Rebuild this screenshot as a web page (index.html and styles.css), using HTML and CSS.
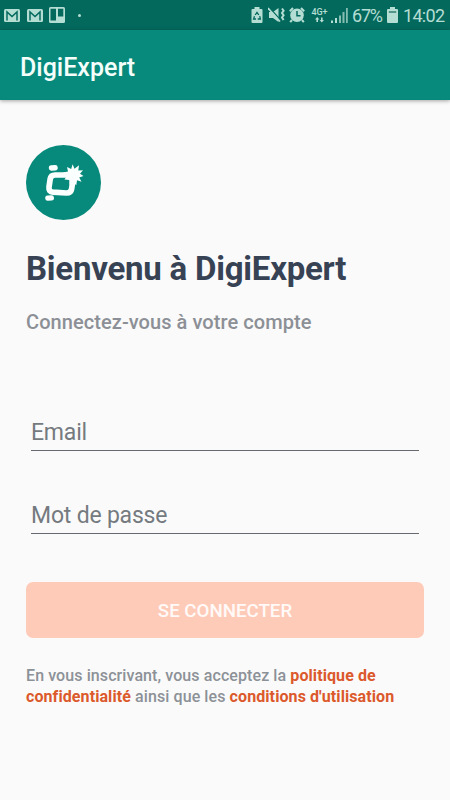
FILE: index.html
```html
<!DOCTYPE html>
<html lang="fr">
<head>
    <meta charset="UTF-8">
    <meta name="viewport" content="width=device-width, initial-scale=1.0">
    <title>DigiExpert</title>
    <link rel="stylesheet" href="styles.css">
</head>
<body>
    <div class="status-bar">
        <div class="status-left">
            <svg class="mail" width="16" height="13" viewBox="0 0 16 13">
                <rect width="16" height="13" rx="1.5" fill="#b4ddd3"/>
                <path d="M3 11.5V3L8 7.5L13 3V11.5" fill="none" stroke="#04695d" stroke-width="1.5"/>
            </svg>
            <svg class="mail" width="16" height="13" viewBox="0 0 16 13">
                <rect width="16" height="13" rx="1.5" fill="#b4ddd3"/>
                <path d="M3 11.5V3L8 7.5L13 3V11.5" fill="none" stroke="#04695d" stroke-width="1.5"/>
            </svg>
            <svg class="board" width="16" height="16" viewBox="0 0 16 16">
                <rect width="16" height="16" rx="1.5" fill="#b4ddd3"/>
                <path d="M1.5 1.7H7V13.5H1.5ZM9 1.7H14.3V9.5H9Z" fill="#04695d"/>
            </svg>
            <span class="dot"></span>
        </div>
        <div class="status-right">
            <svg width="12" height="16" viewBox="0 0 12 16">
                <path d="M3.5 0H8.5V2H10.5Q11.5 2 11.5 3V15Q11.5 16 10.5 16H1.5Q.5 16 .5 15V3Q.5 2 1.5 2H3.5Z" fill="#b4ddd3"/>
                <path d="M4.2 8L6 5.3L7.8 8M8.7 9.2L9.4 12H6.7M5 12H2.6L3.5 9.2" fill="none" stroke="#04695d" stroke-width="1.3"/>
            </svg>
            <svg class="mute" width="17" height="16" viewBox="0 0 17 16">
                <path d="M1 5H5L10.5 1V15L5 11H1Z" fill="#b4ddd3"/>
                <path d="M1 0L12 12.5" stroke="#04695d" stroke-width="1.2"/>
                <path d="M0 1L12 14.5" stroke="#b4ddd3" stroke-width="1.6"/>
                <path d="M14 1.5L15.6 3.7L14 6L15.6 8.2L14 10.5L15.6 13" fill="none" stroke="#b4ddd3" stroke-width="2"/>
            </svg>
            <svg class="alarm" width="16" height="16" viewBox="0 0 16 16">
                <path d="M.8 4.2L4 1M15.2 4.2L12 1M3 13L1.2 15.2M13 13L14.8 15.2" stroke="#b4ddd3" stroke-width="2"/>
                <circle cx="8" cy="8.3" r="6.8" fill="#b4ddd3"/>
                <path d="M8 4V8.8H11.5" fill="none" stroke="#04695d" stroke-width="1.5"/>
            </svg>
            <div class="network">
                <span>4G+</span>
                <svg width="9" height="6" viewBox="0 0 9 6">
                    <path d="M2.2 0L4.4 2.5H3V5H1.4V2.5H0ZM6.8 5.5L4.6 3H6V.5H7.6V3H9Z" fill="#b4ddd3"/>
                </svg>
            </div>
            <svg class="signal" width="17" height="15" viewBox="0 0 17 15">
                <path d="M0 12.5H2V15H0ZM4 10H6V15H4Z" fill="#b4ddd3"/>
                <path d="M8 7.5H10V15H8ZM11.5 4H13.5V15H11.5ZM15 0H16.8V15H15Z" fill="#83bdb1"/>
            </svg>
            <span class="percent">67%</span>
            <svg class="battery" width="11" height="16" viewBox="0 0 11 16">
                <path d="M3 0H8V2H10Q11 2 11 3V15Q11 16 10 16H1Q0 16 0 15V3Q0 2 1 2H3Z" fill="#b4ddd3"/>
                <path d="M1.8 4H9.2V6H1.8Z" fill="#54958a"/>
            </svg>
            <span class="time">14:02</span>
        </div>
    </div>
    <header class="app-bar"><span class="app-title">DigiExpert</span></header>

    <main class="container">
        <svg class="logo" width="75" height="75" viewBox="0 0 75 75">
            <circle cx="37.5" cy="37.5" r="37.5" fill="#07897b"/>
            <rect x="22.8" y="20.2" width="9" height="5.4" rx="2.7" fill="#fbfffe" transform="rotate(-5 27 23)"/>
            <rect x="19.2" y="50.5" width="8.8" height="5.2" rx="2.6" fill="#fbfffe" transform="rotate(-5 23 53)"/>
            <path d="M41 30H29Q24.8 30 24.2 34L23 42Q22.5 46.8 27 47.2L40.5 48Q45 48 45.6 44L46.8 36" fill="none" stroke="#fbfffe" stroke-width="5.7" stroke-linejoin="round"/>
            <path d="M46.6 19.3L48.5 23.8L53 20.2L52.3 25.6L57 25.2L54 28.8L57.5 31L53.2 32.4L55.5 36.8L51 35.3L50.3 40.3L46.8 37L43.5 39.5L43.2 35L38.5 34.5L41 30.5L37.3 27.6L42 26.4L41 22L45.2 24Z" fill="#fbfffe"/>
        </svg>

        <h1>Bienvenu à DigiExpert</h1>
        <p class="subtitle">Connectez-vous à votre compte</p>

        <form>
            <input class="email" type="email" placeholder="Email" aria-label="Email">
            <input class="password" type="password" placeholder="Mot de passe" aria-label="Mot de passe">
            <button type="button" disabled>SE CONNECTER</button>
        </form>

        <p class="terms">
            En vous inscrivant, vous acceptez la <b>politique de</b><br>
            <b>confidentialité</b> ainsi que les <b>conditions d'utilisation</b>
        </p>
    </main>
</body>
</html>
```

FILE: styles.css
```css
* {
    box-sizing: border-box;
}
body {
    font-family: Roboto, sans-serif;
    margin: 0;
    height: 800px;
    background-color: #fafafa;
    overflow: hidden;
}
.status-bar {
    display: flex;
    justify-content: space-between;
    height: 30px;
    padding: 0 6px 0 4px;
    background-color: #04695d;
    color: #b4ddd3;
}
.status-left, .status-right {
    display: flex;
    align-items: center;
}
.mail {
    margin-right: 7px;
}
.board {
    margin-right: 13px;
    margin-left: -1px;
}
.dot {
    width: 3px;
    height: 3px;
    border-radius: 50%;
    background-color: #b4ddd3;
}
.mute {
    margin-left: 5px;
}
.alarm {
    margin-left: 4px;
}
.network {
    display: flex;
    flex-direction: column;
    align-items: center;
    width: 17px;
    margin-left: 6px;
    font-size: 9px;
    font-weight: 500;
    line-height: 9px;
}
.signal {
    margin-left: 3px;
}
.percent {
    margin-left: 4px;
    width: 31px;
    font-size: 18px;
    letter-spacing: -1.2px;
}
.battery {
    margin-left: 4px;
}
.time {
    margin-left: 5px;
    width: 41px;
    font-size: 18px;
    letter-spacing: -0.7px;
}
.app-bar {
    display: flex;
    align-items: center;
    height: 70px;
    padding: 4px 20px 0;
    background-color: #07897b;
    color: #f4fffc;
    box-shadow: 0 1px 4px rgba(0, 0, 0, 0.35);
}
.app-title {
    font-size: 25px;
    font-weight: 500;
}
.container {
    padding: 45px 26px 0;
}
.logo {
    display: block;
}
h1 {
    margin: 29px 0 0;
    color: #374354;
    font-size: 33px;
    font-weight: 700;
    letter-spacing: -0.23px;
    line-height: 40px;
    white-space: nowrap;
}
.subtitle {
    margin: 21px 0 0;
    color: #8c9096;
    font-size: 20px;
    font-weight: 500;
    letter-spacing: 0.07px;
    line-height: 24px;
    white-space: nowrap;
}
form {
    display: flex;
    flex-direction: column;
}
input {
    height: 40px;
    margin: 0 5px;
    padding: 3px 0 0;
    border: none;
    border-bottom: 1px solid #66696d;
    border-radius: 0;
    background: none;
    font-family: inherit;
    font-size: 23px;
    letter-spacing: -0.2px;
}
input::placeholder {
    color: #757a80;
    opacity: 1;
}
.email {
    margin-top: 77px;
}
.password {
    margin-top: 43px;
}
button {
    height: 56px;
    margin-top: 48px;
    padding: 2px 0 0;
    border: none;
    border-radius: 7px;
    background-color: #ffcbb9;
    color: #fffaf8;
    font-family: inherit;
    font-size: 18.7px;
    font-weight: 500;
}
.terms {
    margin: 27px 0 0;
    color: #8c9197;
    font-size: 16px;
    font-weight: 500;
    letter-spacing: 0.09px;
    line-height: 21px;
    white-space: nowrap;
}
.terms b {
    color: #dc592c;
    font-weight: 700;
}
```
